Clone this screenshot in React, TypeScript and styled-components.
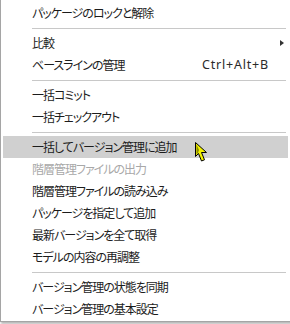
import React from "react";
import styled, { createGlobalStyle } from "styled-components";

const Global = createGlobalStyle`
  html, body { margin: 0; padding: 0; background: #ffffff; }
  body { font-family: "Noto Sans", "Noto Sans CJK JP", sans-serif; }
`;

const Page = styled.div`
  width: 290px;
  height: 324px;
  position: relative;
  overflow: hidden;
  background: #ffffff;
`;

const Menu = styled.div`
  width: 285px;
  padding: 2px 2px 1px 2px;
  background: #ffffff;
  border-left: 1px solid #a5a5a5;
  border-right: 1px solid #a5a5a5;
  border-bottom: 1px solid #a5a5a5;
  box-shadow: 1px 2px 2px rgba(0, 0, 0, 0.28);
  display: flex;
  flex-direction: column;
`;

const Item = styled.div<{ $active?: boolean; $disabled?: boolean }>`
  height: 22px;
  display: flex;
  align-items: center;
  padding-left: 29px;
  padding-right: 4px;
  background: ${(p) => (p.$active ? "#d0d0d0" : "transparent")};
  color: ${(p) => (p.$disabled ? "#a8a8a8" : "#1c1c1c")};
  font-family: "Noto Sans CJK JP", sans-serif;
  font-size: 12px;
  letter-spacing: -1px;
  font-feature-settings: "palt" 1;
  line-height: 22px;
  white-space: nowrap;
  position: relative;
`;

const Label = styled.span`
  flex: 1;
`;

const Shortcut = styled.span`
  font-family: "Noto Sans", "Open Sans", sans-serif;
  font-size: 12.5px;
  letter-spacing: 0.8px;
  color: #2a2a2a;
  margin-right: 15px;
`;

const Arrow = styled.span`
  width: 0;
  height: 0;
  border-top: 3.5px solid transparent;
  border-bottom: 3.5px solid transparent;
  border-left: 4px solid #333333;
  margin-right: 0;
`;

const Separator = styled.div`
  height: 8px;
  display: flex;
  align-items: flex-start;
  padding: 4px 2px 0 29px;
  box-sizing: border-box;
  &::after {
    content: "";
    display: block;
    height: 1px;
    width: 100%;
    background: #c8c8c8;
  }
`;

const Cursor = styled.svg`
  position: absolute;
  left: 195px;
  top: 142px;
`;

type Entry =
  | { kind: "sep" }
  | { kind: "item"; label: string; shortcut?: string; sub?: boolean; active?: boolean; disabled?: boolean };

const entries: Entry[] = [
  { kind: "item", label: "パッケージのロックと解除" },
  { kind: "sep" },
  { kind: "item", label: "比較", sub: true },
  { kind: "item", label: "ベースラインの管理", shortcut: "Ctrl+Alt+B" },
  { kind: "sep" },
  { kind: "item", label: "一括コミット" },
  { kind: "item", label: "一括チェックアウト" },
  { kind: "sep" },
  { kind: "item", label: "一括してバージョン管理に追加", active: true },
  { kind: "item", label: "階層管理ファイルの出力", disabled: true },
  { kind: "item", label: "階層管理ファイルの読み込み" },
  { kind: "item", label: "パッケージを指定して追加" },
  { kind: "item", label: "最新バージョンを全て取得" },
  { kind: "item", label: "モデルの内容の再調整" },
  { kind: "sep" },
  { kind: "item", label: "バージョン管理の状態を同期" },
  { kind: "item", label: "バージョン管理の基本設定" },
];

export default function App() {
  return (
    <Page>
      <Global />
      <Menu>
        {entries.map((e, i) =>
          e.kind === "sep" ? (
            <Separator key={i} />
          ) : (
            <Item key={i} $active={e.active} $disabled={e.disabled}>
              <Label>{e.label}</Label>
              {e.shortcut && <Shortcut>{e.shortcut}</Shortcut>}
              {e.sub && <Arrow />}
            </Item>
          )
        )}
      </Menu>
      <Cursor width="14" height="22" viewBox="0 0 14 22">
        <path
          d="M0.5 0.5 L0.5 14.5 L3.5 11.5 L6.5 19 L9.5 17.8 L6.5 10.5 L11.5 10.5 Z"
          fill="#f2f200"
          stroke="#000000"
          strokeWidth="1"
          strokeLinejoin="miter"
        />
        <path d="M1.5 2.5 L1.5 12.5 L3 11 L4 8 Z" fill="#8a8a00" />
      </Cursor>
    </Page>
  );
}
